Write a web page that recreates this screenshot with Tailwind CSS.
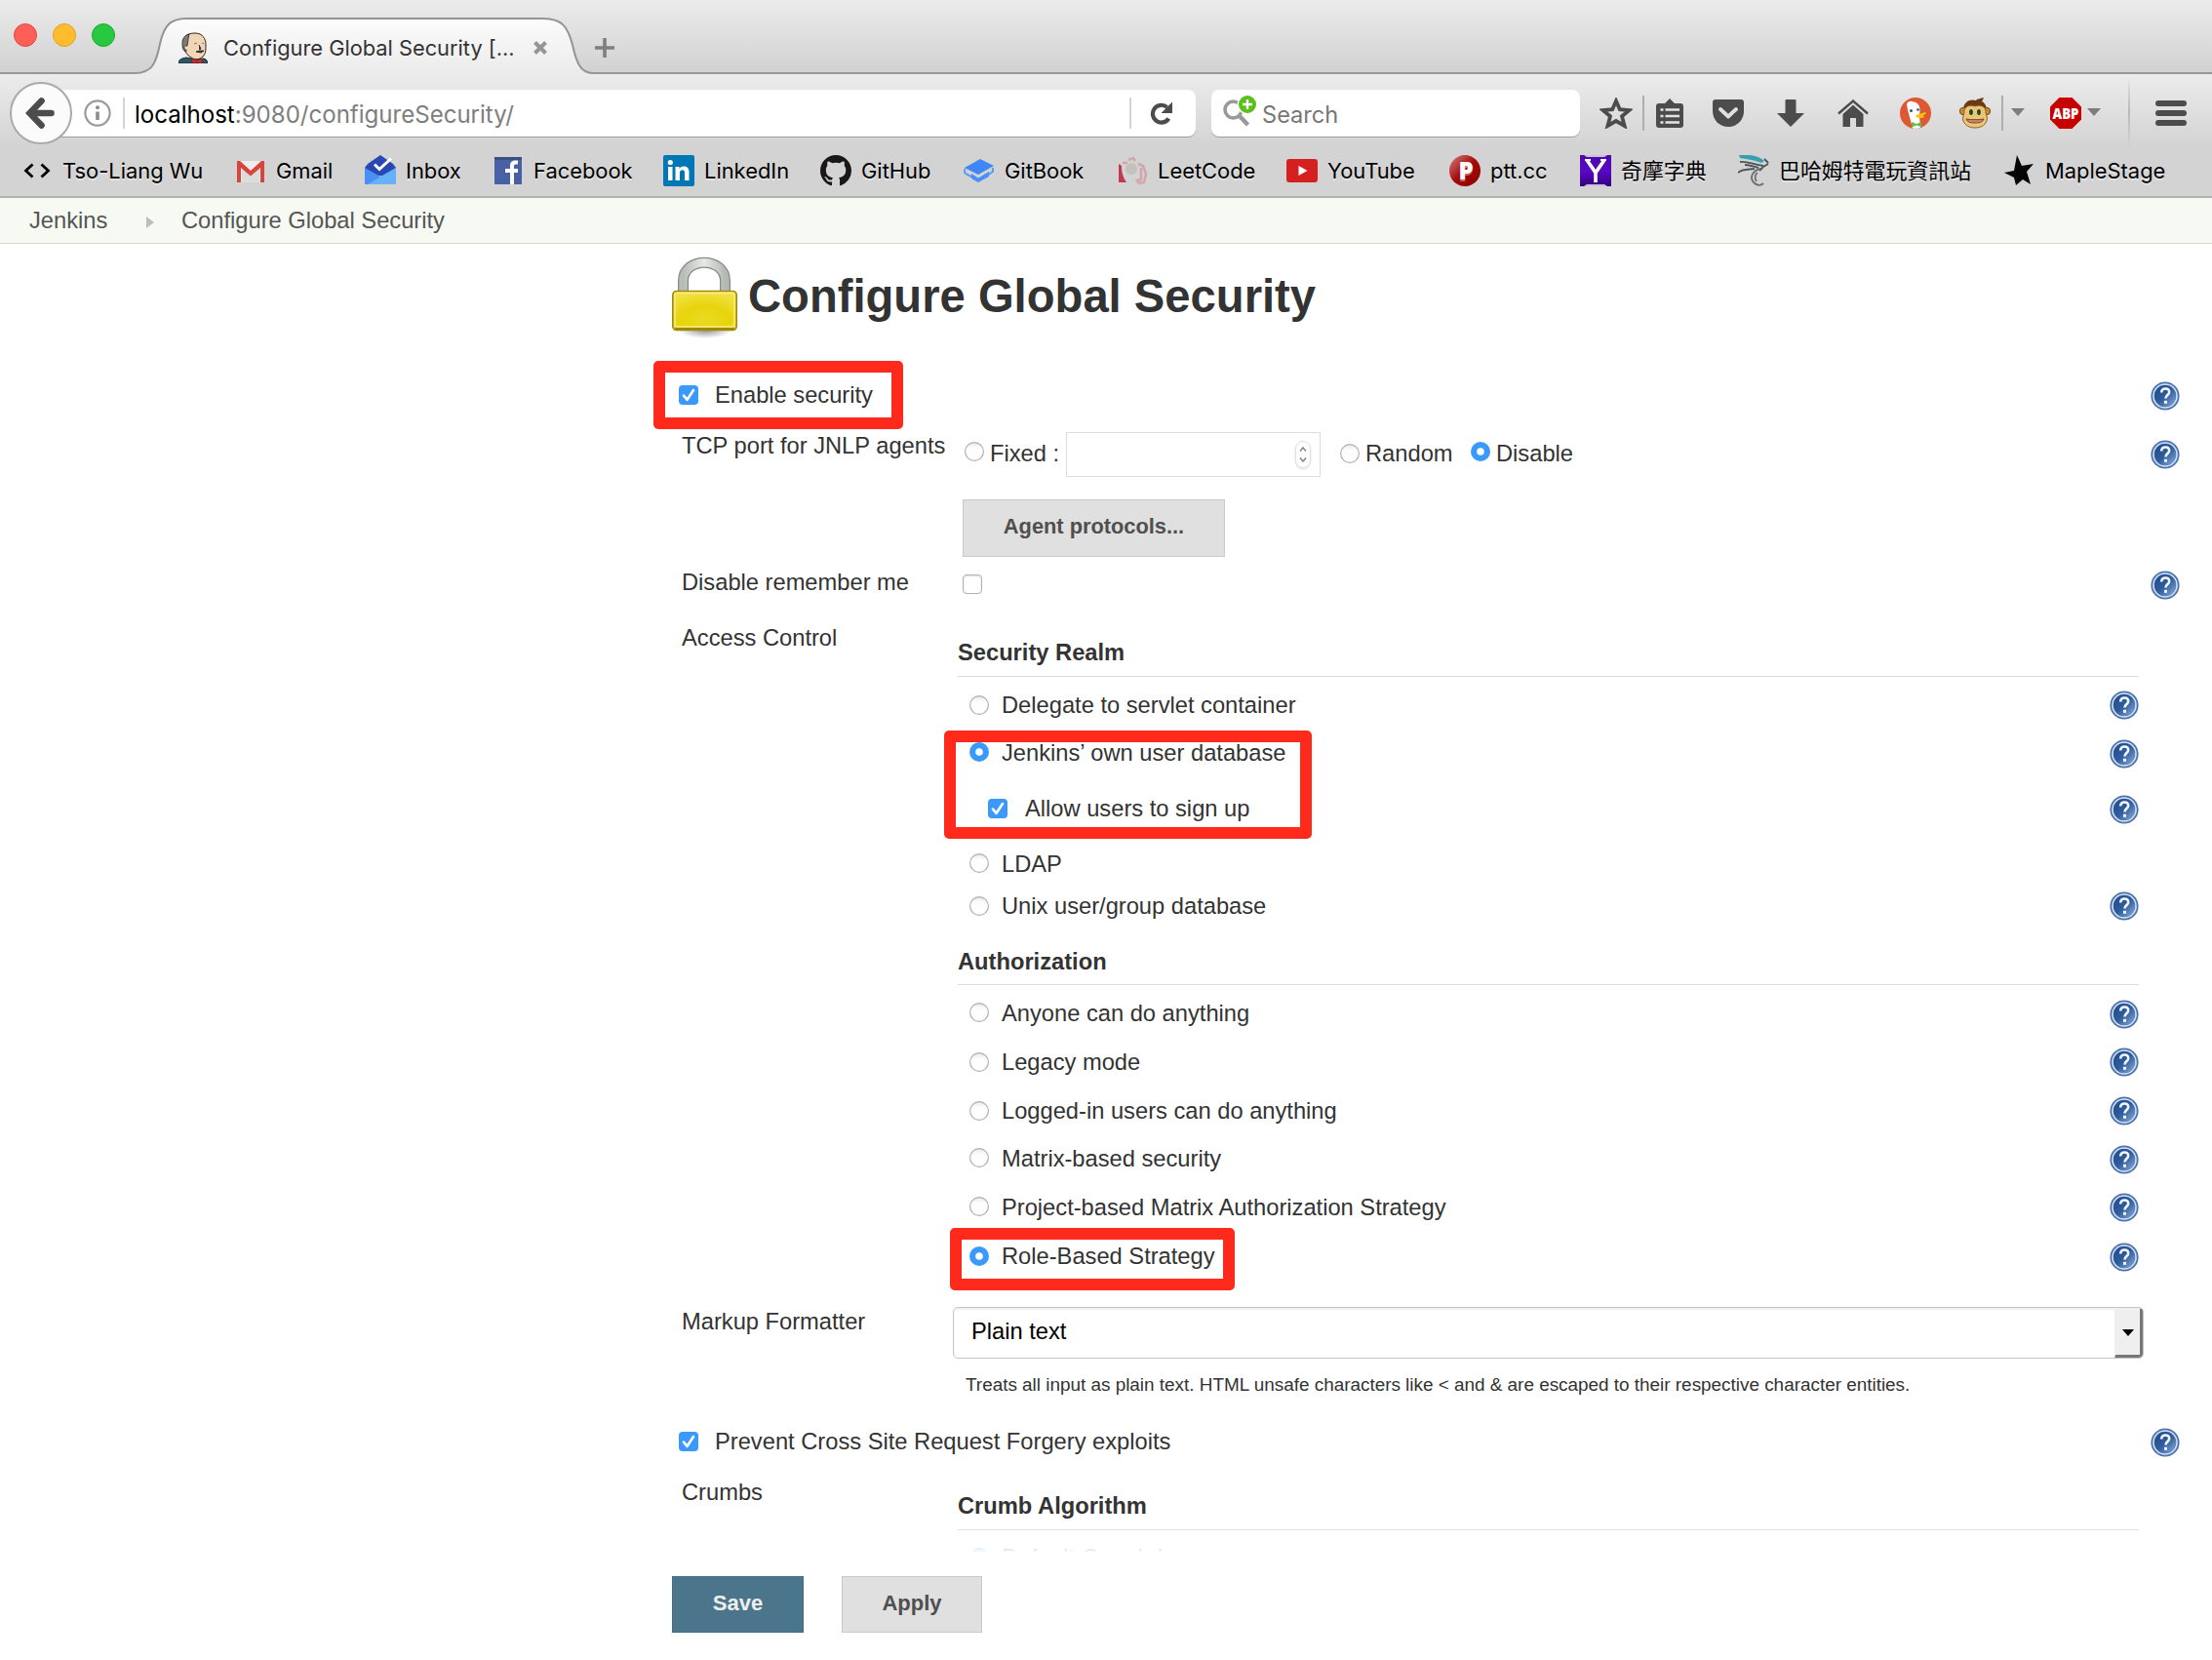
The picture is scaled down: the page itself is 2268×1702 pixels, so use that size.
<!DOCTYPE html>
<html lang="en">
<head>
<meta charset="utf-8">
<title>Configure Global Security [Jenkins]</title>
<script src="https://cdn.jsdelivr.net/npm/@tailwindcss/browser@4"></script>
</head>
<body class="relative h-[1702px] w-[2268px] overflow-hidden bg-white font-['Liberation_Sans',Arial,sans-serif] text-[23.7px] leading-[30px] text-[#333]">

<svg class="absolute size-0">
  <defs>
    <linearGradient id="helpFill" x1="0" y1="0" x2="1" y2="1">
      <stop offset="0" stop-color="#1f4a8a"/><stop offset=".5" stop-color="#2f5c9c"/><stop offset="1" stop-color="#8db0dc"/>
    </linearGradient>
    <linearGradient id="tabFill" x1="0" y1="0" x2="0" y2="1">
      <stop offset="0" stop-color="#fcfcfc"/><stop offset="1" stop-color="#ebebeb"/>
    </linearGradient>
    <linearGradient id="radioFill" x1="0" y1="0" x2="0" y2="1">
      <stop offset="0" stop-color="#e8e8e8"/><stop offset=".3" stop-color="#fdfdfd"/><stop offset="1" stop-color="#fff"/>
    </linearGradient>
    <linearGradient id="shackle" x1="0" y1="0" x2="1" y2="0">
      <stop offset="0" stop-color="#b9bdb8"/><stop offset=".5" stop-color="#e6e9e5"/><stop offset="1" stop-color="#b5b9b4"/>
    </linearGradient>
    <radialGradient id="lockBody" cx=".5" cy=".75" r=".7">
      <stop offset="0" stop-color="#eadb22"/><stop offset=".55" stop-color="#e8d40c"/><stop offset="1" stop-color="#f0e040"/>
    </radialGradient>
    <radialGradient id="lockShadow"><stop offset="0" stop-color="#000" stop-opacity=".4"/><stop offset="1" stop-color="#000" stop-opacity="0"/></radialGradient>
    <linearGradient id="pttFill" x1="0" y1="0" x2="1" y2="1">
      <stop offset="0" stop-color="#d98080"/><stop offset=".5" stop-color="#a30a0a"/><stop offset="1" stop-color="#8c0000"/>
    </linearGradient>
    <linearGradient id="yahooFill" x1="0" y1="0" x2="0" y2="1">
      <stop offset="0" stop-color="#4a0aa8"/><stop offset=".5" stop-color="#5a08c8"/><stop offset="1" stop-color="#35007a"/>
    </linearGradient>
    <symbol id="help" viewBox="0 0 30 30">
      <circle cx="15" cy="15" r="14.6" fill="#4a74b0"/>
      <circle cx="15" cy="15" r="12" fill="none" stroke="#d5e0f0" stroke-width="1.6"/>
      <circle cx="15" cy="15" r="11" fill="url(#helpFill)"/>
      <path d="M11.2 11.4c0-2.500 1.600-3.900 4-3.900s4 1.300 4 3.500c0 3-3.700 3.200-3.700 6.600" fill="none" stroke="#f2f6fb" stroke-width="2.600"/>
      <rect x="14" y="19.800" width="3" height="3" fill="#f2f6fb"/>
    </symbol>
    <symbol id="radio" viewBox="0 0 20 20">
      <circle cx="10" cy="10" r="9.4" fill="url(#radioFill)" stroke="#b0b0b0" stroke-width="1.2"/>
    </symbol>
    <symbol id="radioOn" viewBox="0 0 20 20">
      <circle cx="10" cy="10" r="10" fill="#3b99fc"/><circle cx="10" cy="10" r="3.8" fill="#fff"/>
    </symbol>
    <symbol id="check" viewBox="0 0 20 20">
      <rect width="20" height="20" rx="4" fill="#3b99fc"/>
      <path d="M5 10.6l3.6 4.2L15 5" fill="none" stroke="#fff" stroke-width="2.6" stroke-linecap="round" stroke-linejoin="round"/>
    </symbol>
  </defs>
</svg>

<!-- Browser chrome -->
<header class="font-[Inter,'Noto_Sans_CJK_TC',sans-serif] text-black">
  <div class="flex h-[76px] bg-linear-to-b from-[#ebebeb] to-[#d1d1d1] shadow-[inset_0_-2px_0_#979797]">
    <div class="flex h-[72px] w-[138px] items-center gap-4 pl-[14px]">
      <span class="size-6 rounded-full border border-[#e2463f] bg-[#ff5f57]"></span>
      <span class="size-6 rounded-full border border-[#e0a123] bg-[#ffbd2e]"></span>
      <span class="size-6 rounded-full border border-[#14ae24] bg-[#28c940]"></span>
    </div>
    <div class="relative h-[76px] w-[470px]">
      <svg class="absolute inset-0" width="470" height="76" viewBox="0 0 470 76">
        <path d="M0 75C18 75 22 65 26 45C30 27 36 19 53 19H419C438 19 444 27 449 46C453 64 457 75 470 75V76H0Z" fill="url(#tabFill)"/>
        <path d="M0 75C18 75 22 65 26 45C30 27 36 19 53 19H419C438 19 444 27 449 46C453 64 457 75 470 75" fill="none" stroke="#939393" stroke-width="2"/>
      </svg>
      <div class="relative flex h-[76px] items-center pt-[21px] pl-[45px]">
        <svg class="h-8 w-[30px]" viewBox="0 0 30 32">
          <path d="M0 32c0-4 3-5 8-6l10 2 8-1c3 1 4 3 4 5z" fill="#2c5766" stroke="#17282e"/>
          <path d="M5 9C6 3 11 1 17 1c8 0 11 6 11 12s0 9-3 12-8 4-12 1c-4-2-6-6-7-9z" fill="#f0d6b7" stroke="#2a2320"/>
          <path d="M11 2C6 3 4 7 4 11c0 4 0 7 3 9l0-5 2-1 1-7z" fill="#7e7b79" stroke="#2a2320" stroke-width=".8"/>
          <path d="M8 14c-2-1-3 2-1 4l2 1" fill="#f0d6b7" stroke="#2a2320" stroke-width=".8"/>
          <path d="M16 12l3-1M24 11l2 1" stroke="#8a6f5a" fill="none"/>
          <path d="M21 13l2 4-2 1M18 20l4-1 4 0-3 2z" stroke="#2a2320" stroke-width=".9" fill="#5a3a30"/>
          <path d="M14 27l5 2 5-2v5l-5-1-5 1z" fill="#d8302c" stroke="#7a1210" stroke-width=".6"/>
        </svg>
        <span class="ml-[16px] w-[316px] text-[21.8px] whitespace-nowrap text-[#333]">Configure Global Security [...</span>
        <svg class="ml-[1px] size-4" viewBox="0 0 16 16"><path d="M2.5 2.5l11 11M13.5 2.5l-11 11" stroke="#959595" stroke-width="4"/></svg>
      </div>
    </div>
    <svg class="mt-[38px] ml-[1px] size-[22px]" viewBox="0 0 22 22"><path d="M11 1v20M1 11h20" stroke="#7f7f7f" stroke-width="3.6"/></svg>
  </div>

  <div class="h-[127px] border-b-2 border-[#b0b0b0] bg-linear-to-b from-[#ececec] via-[#d3d3d3] via-60% to-[#d3d3d3]">
    <nav class="flex h-[80px] items-center">
      <div class="relative z-10 ml-[10px] flex size-16 items-center justify-center rounded-full border-2 border-[#aaa] bg-[#fbfbfb]">
        <svg class="mr-[2px] h-8 w-[30px]" viewBox="0 0 30 32"><path d="M16.500 3.500L4.500 16L16.500 28.500M6 16H26.500" fill="none" stroke="#4c4c4c" stroke-width="6.600" stroke-linejoin="miter" stroke-linecap="round"/></svg>
      </div>
      <div class="-ml-8 flex h-12 w-[1184px] items-center rounded-lg bg-white pl-[44px] text-[24.05px] shadow-[0_1px_0_#9d9d9d]">
        <svg class="size-7" viewBox="0 0 28 28"><circle cx="14" cy="14" r="12.6" fill="none" stroke="#9a9a9a" stroke-width="2.2"/><circle cx="14" cy="8.300" r="2" fill="#8c8c8c"/><path d="M14 12.500v8.500" stroke="#8c8c8c" stroke-width="3.600"/></svg>
        <span class="ml-[12px] h-8 w-[2px] bg-[#d4d4d4]"></span>
        <span class="ml-[10px] grow pt-[4px] whitespace-nowrap text-[#7e7e7e]"><span class="text-black">localhost</span>:9080/configureSecurity/</span>
        <span class="h-8 w-[2px] bg-[#d4d4d4]"></span>
        <svg class="mr-[23px] ml-[19px] size-6" viewBox="0 0 24 24"><path d="M19.300 17.500A8.900 8.900 0 1 1 17.500 5.800" fill="none" stroke="#4c4c4c" stroke-width="4.200"/><path d="M23 .5V12H11.500z" fill="#4c4c4c"/></svg>
      </div>
      <div class="ml-4 flex h-12 w-[378px] items-center rounded-lg bg-white pl-3 text-[23.600px] text-[#777] shadow-[0_1px_0_#9d9d9d]">
        <svg class="mt-[-4px] h-9 w-[36px]" viewBox="0 0 36 36"><circle cx="10.500" cy="16.500" r="8.500" fill="none" stroke="#999" stroke-width="3.600"/><path d="M15.500 21.500L25.500 32" stroke="#999" stroke-width="4.500"/><circle cx="25" cy="11" r="10.500" fill="#fff"/><circle cx="25" cy="11" r="9" fill="#5bbf1c"/><path d="M25 6v10M20 11h10" stroke="#fff" stroke-width="2.400"/></svg>
        <span class="ml-[4px] pt-[4px]">Search</span>
      </div>
      <svg class="ml-[20px] h-8 w-[34px]" viewBox="0 0 34 32"><path d="M17 3.500L20.800 12.200L30.500 13L23 19.200L25.600 29L17 24L8.400 29L11 19.200L3.500 13L13.200 12.200Z" fill="none" stroke="#4c4c4c" stroke-width="3.800"/></svg>
      <span class="ml-[10px] h-9 w-[2px] bg-[#aeaeae]"></span>
      <svg class="ml-[12px] h-[30px] w-7" viewBox="0 0 28 30"><path d="M14 0l5 5h6a3 3 0 0 1 3 3v19a3 3 0 0 1-3 3H3a3 3 0 0 1-3-3V8a3 3 0 0 1 3-3h6z" fill="#4c4c4c"/><path d="M9.500 11.500H24M9.500 18H24M9.500 24.500H24M4.500 11.500h3M4.500 18h3M4.500 24.500h3" stroke="#e4e4e4" stroke-width="2.600"/></svg>
      <svg class="ml-[30px] h-[28px] w-8" viewBox="0 0 32 28"><path d="M3 0h26a3 3 0 0 1 3 3v9c0 9-7 16-16 16S0 21 0 12V3a3 3 0 0 1 3-3z" fill="#4c4c4c"/><path d="M8 10l8 7.500 8-7.500" fill="none" stroke="#e0e0e0" stroke-width="3.800" stroke-linecap="round" stroke-linejoin="round"/></svg>
      <svg class="ml-[34px] h-7 w-7" viewBox="0 0 28 28"><path d="M8.500 1a1 1 0 0 1 1-1h9a1 1 0 0 1 1 1v13H28L14 28 0 14h8.500z" fill="#4c4c4c"/></svg>
      <svg class="ml-[34px] h-[28px] w-8" viewBox="0 0 32 28"><path d="M1 14.500L16 1.500 31 14.500" fill="none" stroke="#4c4c4c" stroke-width="2.400"/><path d="M16 5.500L26.500 15v13H19v-9h-6v9H5.500V15z" fill="#4c4c4c"/></svg>
      <svg class="ml-[32px] size-8" viewBox="0 0 32 32"><circle cx="16" cy="16" r="16" fill="#de5833"/><path d="M7 8c0-4 4-5 7-3.500 4 .5 6.500 3.500 6.500 8L20 19l1 12c-3 1-6 1-8 .5L10 20C8.500 15 8 12 7 8z" fill="#fff"/><circle cx="11.500" cy="13.500" r="1.500" fill="#2d4f8e"/><circle cx="18.500" cy="12.500" r="1.300" fill="#2d4f8e"/><path d="M16 19c3-3 6-2 10-4 2 0 0 3-3 3.500 2 .5 3 1 1 2-3 1-6 1-8-1.500z" fill="#fdc20a"/><path d="M12 25l5 2 5-2v5l-5-1.500-5 2z" fill="#66bd47"/></svg>
      <svg class="ml-[29px] size-8" viewBox="0 0 32 32"><path d="M4 11C5 4 11 1 17 3c1-2 6-2 8-3-1 2-1 3-2 4 4 2 5 6 5 10z" fill="#6b3a14"/><circle cx="4" cy="14" r="3.700" fill="#c88a35" stroke="#7a4a16"/><circle cx="28" cy="14" r="3.700" fill="#c88a35" stroke="#7a4a16"/><path d="M5 16c-1-7 6-9 11-7 5-2 12 0 11 7 1 3 2 5 1 8-2 5-7 7-12 7S6 29 4 24c-1-3 0-5 1-8z" fill="#ecc57a" stroke="#94601f"/><ellipse cx="12" cy="15" rx="1.900" ry="3" fill="#174c1b"/><ellipse cx="20" cy="15" rx="1.900" ry="3" fill="#174c1b"/><path d="M7 22c5 1 13 1 18 0-1 3-4 4-9 4s-8-1-9-4z" fill="#c98a68" stroke="#7b4420"/></svg>
      <span class="ml-[11px] h-9 w-[2px] bg-[#aeaeae]"></span>
      <svg class="mt-[-3px] ml-[8px] h-2 w-[14px]" viewBox="0 0 14 8"><path d="M0 0h14L7 8z" fill="#7d7d7d"/></svg>
      <svg class="ml-[26px] size-8" viewBox="0 0 32 32"><path d="M9.500 0h13L32 9.500v13L22.500 32h-13L0 22.500v-13z" fill="#c70000"/><text x="16" y="21.800" text-anchor="middle" textLength="27" lengthAdjust="spacingAndGlyphs" font-family="Open Sans" font-weight="800" font-size="16.500" fill="#fff">ABP</text></svg>
      <svg class="mt-[-3px] ml-[6px] h-2 w-[14px]" viewBox="0 0 14 8"><path d="M0 0h14L7 8z" fill="#7d7d7d"/></svg>
      <span class="ml-[28px] h-[78px] w-[2px] bg-linear-to-b from-transparent via-[#b9b9b9] to-transparent"></span>
      <div class="ml-[26px] flex w-8 flex-col gap-1"><span class="h-[6px] rounded-[3px] bg-[#4c4c4c]"></span><span class="h-[6px] rounded-[3px] bg-[#4c4c4c]"></span><span class="h-[6px] rounded-[3px] bg-[#4c4c4c]"></span></div>
    </nav>

    <!-- Bookmarks -->
    <div class="flex h-[38px] items-center pl-[22px] text-[21.9px] whitespace-nowrap [text-shadow:0_2px_0_rgba(255,255,255,0.4)]">
      <div class="flex w-[219px] items-center gap-[10px]"><svg class="size-8" viewBox="0 0 32 32"><path d="M11.500 9.500L4.500 16l7 6.500M20.500 9.500l7 6.500-7 6.500" fill="none" stroke="#000" stroke-width="2.800"/></svg>Tso-Liang Wu</div>
      <div class="flex w-[133px] items-center gap-[10px]"><svg class="size-8" viewBox="0 0 32 32"><path d="M2 6h28v22H2z" fill="#eee"/><path d="M7 13l9 8 9-8v15H7z" fill="#dcdcdc"/><path d="M2 6h3l11 10L27 6h3v22h-4V13L16 21.500 6 13v15H2z" fill="#d8453a"/></svg>Gmail</div>
      <div class="flex w-[131px] items-center gap-[10px]"><svg class="size-8" viewBox="0 0 32 32"><path d="M3 9L16 0l13 9 3 4v8H0v-8z" fill="#2a48b4"/><path d="M0 13l16 9 16-9v17H0z" fill="#4a90f4"/><path d="M32 13v17H3z" fill="#67b1f8"/><path d="M10 9.500l5 5L27 3.500" fill="none" stroke="#fff" stroke-width="3"/></svg>Inbox</div>
      <div class="flex w-[175px] items-center gap-[10px]"><svg class="size-8" viewBox="0 0 32 32"><path d="M2 2h28v28H2z" fill="#4860a4"/><path d="M2 2h28v3H2z" fill="#3a5083"/><path d="M18 30V18h-5v-4h5v-3c0-4 2-5.500 6-5.500h2v4h-2c-1.500 0-2 .5-2 2V14h4v4h-4v12z" fill="#fff"/></svg>Facebook</div>
      <div class="flex w-[161px] items-center gap-[10px]"><svg class="size-8" viewBox="0 0 32 32"><rect width="32" height="32" rx="2" fill="#0077b5"/><path d="M5 12h4.500v14H5zM12.500 12h4v2c3-4 10-3 10 3v9H22v-8c0-4-5-3-5 0v8h-4.500z" fill="#fff"/><circle cx="7.300" cy="7.500" r="2.600" fill="#fff"/></svg>LinkedIn</div>
      <div class="flex w-[147px] items-center gap-[10px]"><svg class="size-8" viewBox="0 0 16 16"><path fill="#191717" d="M8 0C3.580 0 0 3.580 0 8c0 3.540 2.290 6.530 5.470 7.590.4.070.55-.17.55-.38 0-.19-.01-.82-.01-1.490-2.010.37-2.530-.49-2.690-.94-.09-.23-.48-.94-.82-1.130-.28-.15-.68-.52-.01-.53.63-.01 1.080.58 1.230.82.72 1.210 1.870.87 2.330.66.07-.52.28-.87.51-1.070-1.780-.2-3.640-.89-3.640-3.950 0-.87.31-1.590.82-2.150-.08-.2-.36-1.020.08-2.120 0 0 .67-.21 2.200.82.64-.18 1.320-.27 2-.27s1.360.09 2 .27c1.530-1.040 2.200-.82 2.200-.82.44 1.100.16 1.920.08 2.120.51.56.82 1.270.82 2.150 0 3.070-1.870 3.750-3.650 3.950.29.25.54.73.54 1.480 0 1.070-.01 1.930-.01 2.200 0 .21.15.46.55.38A8.010 8.010 0 0 0 16 8c0-4.420-3.580-8-8-8z"/></svg>GitHub</div>
      <div class="flex w-[157px] items-center gap-[10px]"><svg class="size-8" viewBox="0 0 32 32"><path d="M1 13L17 4l14 7-16 9z" fill="#3f86f7"/><path d="M2 14c-2 2-1 4 0 5l13 7 15-9v-4" fill="none" stroke="#5f9bf6" stroke-width="2"/><path d="M8 19l7 4.500L26 17v5l-11 6-7-4z" fill="#4a8ef8"/></svg>GitBook</div>
      <div class="flex w-[174px] items-center gap-[10px]"><svg class="size-8" viewBox="0 0 32 32"><path d="M2 9l3 2c0 6 1 11 5 17H2z" fill="#c23a4c"/><path d="M6 8h5M12 5l5-2 2 3M22 9l5 2 3 8-2 9-5 1-2-3 4-1V13" fill="none" stroke="#d3a6aa" stroke-width="2.600"/><circle cx="15" cy="14" r="6" fill="#c4c2bb"/></svg>LeetCode</div>
      <div class="flex w-[167px] items-center gap-[10px]"><svg class="size-8" viewBox="0 0 32 32"><rect y="4" width="32" height="24" rx="3" fill="#d5201f"/><path d="M12.500 11l9 5-9 5z" fill="#fff"/></svg>YouTube</div>
      <div class="flex w-[134px] items-center gap-[10px]"><svg class="size-8" viewBox="0 0 32 32"><circle cx="16" cy="16" r="16" fill="url(#pttFill)"/><text x="17" y="25" text-anchor="middle" font-family="Open Sans" font-weight="800" font-size="24" fill="#fff">P</text></svg>ptt.cc</div>
      <div class="flex w-[162px] items-center gap-[10px]"><svg class="size-8" viewBox="0 0 32 32"><path d="M0 0h32v32H0z" fill="url(#yahooFill)"/><path d="M4 0h24l-3 2H7zM4 32h24l-3-2H7z" fill="#cdbfe0"/><path d="M7 5l9 13 9-13M16 17v11" fill="none" stroke="#fff" stroke-width="3.600"/><path d="M5 5h6M21 5h6" stroke="#fff" stroke-width="2"/></svg>奇摩字典</div>
      <div class="flex w-[273px] items-center gap-[10px]"><svg class="size-8" viewBox="0 0 32 32"><path d="M1 0h12c6 1 11 3 14 6l-3 2C16 5 8 4 2 3z" fill="#36a0b2"/><path d="M2 7c8-1 14 3 24 4M7 10c6 0 9 2 14 3M0 18c5-4 10-3 17-4M31 9l-5 3-4 4M27 4l4 4" fill="none" stroke="#4e5558" stroke-width="1.800"/><path d="M23 14c-9 2-11 10-7 14 3 3 7 4 10 1M20 18c-3 2-3 6-1 9" fill="none" stroke="#6a6e70" stroke-width="1.800"/></svg>巴哈姆特電玩資訊站</div>
      <div class="flex items-center gap-[10px]"><svg class="size-8" viewBox="0 0 32 32"><path d="M13 0l5 11 12-2-7 8 4 13-8-5-7 6-2-8-10-5 10-2z" fill="#050505"/></svg>MapleStage</div>
    </div>
  </div>
</header>

<!-- Breadcrumbs -->
<div class="flex h-[47px] items-center border-b border-[#d3d9cf] bg-[#f6faf2] pb-[1px] pl-[30px] text-[#555]">
  <span class="w-[120px]">Jenkins</span>
  <svg class="mt-1 h-3 w-[8px]" viewBox="0 0 8 12"><path d="M0 0l8 6-8 6z" fill="#bdbdbd"/></svg>
  <span class="ml-[28px]">Configure Global Security</span>
</div>

<main>
  <div class="flex h-[105px] items-center pl-[688px]">
    <svg class="mt-[4px] h-[84px] w-[69px]" viewBox="0 0 69 84">
      <ellipse cx="35" cy="76" rx="27" ry="8" fill="url(#lockShadow)"/>
      <path d="M12.500 40V25C12.500 0 55.500 0 55.500 25V40" fill="none" stroke="#858a83" stroke-width="11"/>
      <path d="M12.500 40V25C12.500 0 55.500 0 55.500 25V40" fill="none" stroke="url(#shackle)" stroke-width="8.500"/>
      <rect x="1.800" y="35.500" width="65.400" height="40" rx="4" fill="url(#lockBody)" stroke="#a08c0c" stroke-width="1.600"/>
      <path d="M4 74h61" stroke="#a08800" stroke-width="2.500"/>
      <rect x="4" y="37.500" width="61" height="34.500" rx="2" fill="none" stroke="#f8ef8a" stroke-width="1.300"/>
    </svg>
    <h1 class="mt-[3px] ml-[10px] text-[47.200px] leading-[50px] font-bold">Configure Global Security</h1>
  </div>

  <div class="mt-[35px] flex h-[30px] items-center pr-[33px] pl-[696px]">
    <svg class="size-5"><use href="#check"/></svg>
    <span class="ml-[17px]">Enable security</span>
    <svg class="mt-[2px] ml-auto size-[30px]"><use href="#help"/></svg>
  </div>

  <section class="flex pr-[33px] pl-[699px]">
    <div class="w-[288px] pt-[22px]">TCP port for JNLP agents</div>
    <div class="grow pt-[23px]">
      <div class="flex h-[46px] items-center pl-[2px]">
        <svg class="mb-[6px] size-5"><use href="#radio"/></svg>
        <span class="mb-[3px] ml-[6px] w-[78px]">Fixed :</span>
        <span class="flex h-[46px] w-[261px] items-center justify-end border border-[#dcdcdc] pr-[9px]">
          <span class="flex h-7 w-4 flex-col items-center justify-between rounded-full border border-[#e0e0e0] py-[5px] shadow-sm">
            <svg class="h-[5px] w-2" viewBox="0 0 8 5"><path d="M1 4.500L4 1l3 3.500" fill="none" stroke="#888" stroke-width="1.600"/></svg>
            <svg class="h-[5px] w-2" viewBox="0 0 8 5"><path d="M1 .5L4 4 7 .5" fill="none" stroke="#888" stroke-width="1.600"/></svg>
          </span>
        </span>
        <svg class="mb-[2px] ml-[20px] size-5"><use href="#radio"/></svg>
        <span class="mb-[3px] ml-[6px] w-[108px]">Random</span>
        <svg class="mb-[6px] size-5"><use href="#radioOn"/></svg>
        <span class="mb-[3px] ml-[6px]">Disable</span>
        <svg class="ml-auto size-[30px]"><use href="#help"/></svg>
      </div>
      <button class="mt-[23px] flex h-[59px] w-[269px] items-center justify-center border border-[#c9c9c9] bg-[#e0e0e0] pb-[4px] text-[21.8px] font-bold text-[#4f4f4f]">Agent protocols...</button>
    </div>
  </section>

  <div class="mt-[11px] flex h-[30px] items-center pr-[33px] pl-[699px]">
    <span class="w-[288px]">Disable remember me</span>
    <span class="mt-[4px] size-5 rounded-[4px] border border-[#b0b0b0] bg-white shadow-[inset_0_1px_2px_#ddd]"></span>
    <svg class="mt-[6px] ml-auto size-[30px]"><use href="#help"/></svg>
  </div>

  <section class="flex pr-[75px] pl-[699px]">
    <div class="w-[283px] pt-[27px]">Access Control</div>
    <div class="grow pt-[42px]">
      <h2 class="h-10 border-b border-[#dcdcdc] font-bold">Security Realm</h2>
      <div class="mt-[14px] flex h-[30px] items-center pl-3"><svg class="size-5"><use href="#radio"/></svg><span class="ml-[13px]">Delegate to servlet container</span><svg class="ml-auto size-[30px]"><use href="#help"/></svg></div>
      <div class="mt-[19px] flex h-[30px] items-center pl-3"><svg class="mb-[2px] size-5"><use href="#radioOn"/></svg><span class="ml-[13px]">Jenkins’ own user database</span><svg class="mt-[2px] ml-auto size-[30px]"><use href="#help"/></svg></div>
      <div class="mt-[27px] flex h-[30px] items-center pl-[31px]"><svg class="size-5"><use href="#check"/></svg><span class="ml-[18px]">Allow users to sign up</span><svg class="mt-[2px] ml-auto size-[30px]"><use href="#help"/></svg></div>
      <div class="mt-[27px] flex h-[30px] items-center pl-3"><svg class="mb-[2px] size-5"><use href="#radio"/></svg><span class="ml-[13px]">LDAP</span></div>
      <div class="mt-[13px] flex h-[30px] items-center pl-3"><svg class="size-5"><use href="#radio"/></svg><span class="ml-[13px]">Unix user/group database</span><svg class="ml-auto size-[30px]"><use href="#help"/></svg></div>
      <h2 class="mt-[27px] h-[39px] border-b border-[#dcdcdc] font-bold">Authorization</h2>
      <div class="mt-[14px] flex h-[30px] items-center pl-3"><svg class="mb-[2px] size-5"><use href="#radio"/></svg><span class="ml-[13px]">Anyone can do anything</span><svg class="mt-[2px] ml-auto size-[30px]"><use href="#help"/></svg></div>
      <div class="mt-[20px] flex h-[30px] items-center pl-3"><svg class="size-5"><use href="#radio"/></svg><span class="ml-[13px]">Legacy mode</span><svg class="ml-auto size-[30px]"><use href="#help"/></svg></div>
      <div class="mt-[20px] flex h-[30px] items-center pl-3"><svg class="size-5"><use href="#radio"/></svg><span class="ml-[13px]">Logged-in users can do anything</span><svg class="ml-auto size-[30px]"><use href="#help"/></svg></div>
      <div class="mt-[19px] flex h-[30px] items-center pl-3"><svg class="mb-[2px] size-5"><use href="#radio"/></svg><span class="ml-[13px]">Matrix-based security</span><svg class="mt-[2px] ml-auto size-[30px]"><use href="#help"/></svg></div>
      <div class="mt-[20px] flex h-[30px] items-center pl-3"><svg class="mb-[2px] size-5"><use href="#radio"/></svg><span class="ml-[13px]">Project-based Matrix Authorization Strategy</span><svg class="ml-auto size-[30px]"><use href="#help"/></svg></div>
      <div class="mt-[20px] flex h-[30px] items-center pl-3"><svg class="size-5"><use href="#radioOn"/></svg><span class="ml-[13px]">Role-Based Strategy</span><svg class="mt-[1px] ml-auto size-[30px]"><use href="#help"/></svg></div>
    </div>
  </section>

  <section class="flex pr-[70px] pl-[699px]">
    <div class="w-[278px] pt-[37px]">Markup Formatter</div>
    <div class="grow pt-[37px]">
      <div class="flex h-[53px] items-stretch overflow-hidden rounded-[5px] border border-[#c4c4c4] bg-white shadow-[inset_0_2px_2px_#eee]">
        <span class="grow pt-[9px] pl-[18px] text-black">Plain text</span>
        <span class="flex w-[29px] items-center justify-center rounded-br-[4px] border-t border-r-[3px] border-b-[3px] border-l border-t-[#efefef] border-r-[#777] border-b-[#777] border-l-[#efefef] bg-[#efefef]"><svg class="mt-[2px] ml-[1px] h-[7px] w-3" viewBox="0 0 12 7"><path d="M0 0h12L6 7z" fill="#000"/></svg></span>
      </div>
      <div class="mt-[12px] pl-[13px] text-[18.900px] whitespace-nowrap">Treats all input as plain text. HTML unsafe characters like &lt; and &amp; are escaped to their respective character entities.</div>
    </div>
  </section>

  <div class="mt-[28px] flex h-[30px] items-center pr-[33px] pl-[696px]">
    <svg class="size-5"><use href="#check"/></svg>
    <span class="ml-[17px]">Prevent Cross Site Request Forgery exploits</span>
    <svg class="mt-[2px] ml-auto size-[30px]"><use href="#help"/></svg>
  </div>

  <section class="flex pr-[75px] pl-[699px]">
    <div class="w-[283px] pt-[22px]">Crumbs</div>
    <div class="grow pt-[36px]">
      <h2 class="h-10 border-b border-[#dcdcdc] font-bold">Crumb Algorithm</h2>
      <div class="mt-[13px] flex h-[30px] items-center pl-3"><svg class="size-5"><use href="#radioOn"/></svg><span class="ml-[13px]">Default Crumb Issuer</span></div>
    </div>
  </section>
</main>

<!-- Sticky action bar fading out the form beneath it -->
<footer class="absolute inset-x-0 bottom-0">
  <div class="h-[27px] bg-linear-to-b from-white/0 to-white"></div>
  <div class="flex h-[110px] gap-[39px] bg-white pt-6 pl-[689px] text-[22px] font-bold">
    <button class="h-[58px] w-[135px] border border-[#3f7088] bg-[#4b758b] pb-[3px] text-[#eee]">Save</button>
    <button class="h-[58px] w-[144px] border border-[#c9c9c9] bg-[#e0e0e0] pb-[3px] text-[#4f4f4f]">Apply</button>
  </div>
</footer>

<!-- Highlight boxes drawn over the form -->
<div class="absolute top-[370px] left-[670px] h-[70px] w-[256px] rounded-[5px] border-[12px] border-[#ff2a1c]"></div>
<div class="absolute top-[749px] left-[968px] h-[111px] w-[377px] rounded-[5px] border-[12px] border-[#ff2a1c]"></div>
<div class="absolute top-[1259px] left-[974px] h-[64px] w-[292px] rounded-[5px] border-[12px] border-[#ff2a1c]"></div>
</body>
</html>
